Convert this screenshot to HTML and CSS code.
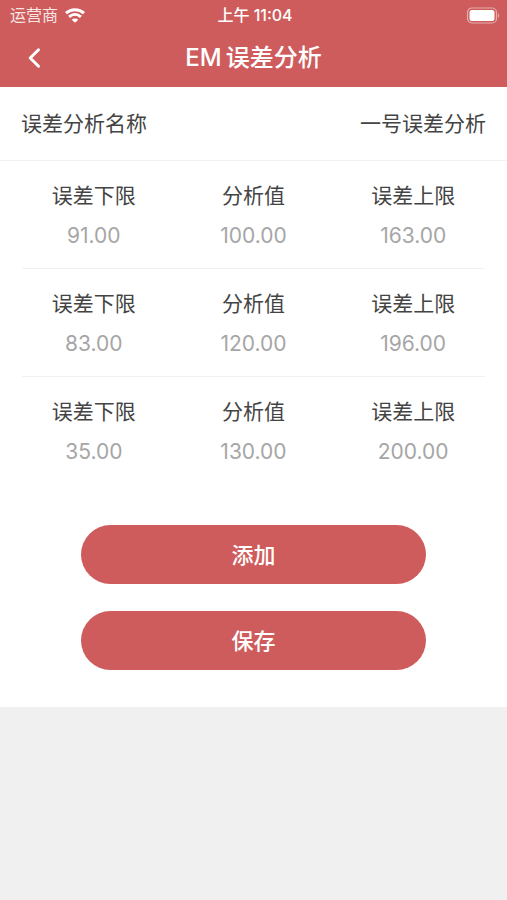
FILE: index.html
```html
<!DOCTYPE html>
<html lang="zh-CN">
<head>
<meta charset="utf-8">
<meta name="viewport" content="width=device-width, initial-scale=1">
<title>EM误差分析</title>
<link rel="stylesheet" href="styles.css">
</head>
<body>
<header class="top">
  <div class="status">
    <div class="carrier">
      <span>运营商</span>
      <svg width="20" height="15" viewBox="0 0 20 15" fill="none" stroke="#fff" aria-hidden="true">
        <path d="M1 5.2C6 .6 14 .6 19 5.2" stroke-width="3"/>
        <path d="M4.1 8.9c3.5-3.2 8.3-3.2 11.8 0" stroke-width="2.8"/>
        <path d="M10 14.8 6.7 11.7c1.9-1.7 4.7-1.7 6.6 0z" fill="#fff" stroke="none"/>
      </svg>
    </div>
    <span class="time">上午 11:04</span>
    <svg class="battery" width="34" height="17" viewBox="0 0 34 17" aria-hidden="true">
      <rect x="1.5" y="1" width="29" height="15" rx="4.5" fill="none" stroke="#fff" stroke-opacity=".5" stroke-width="1.2"/>
      <rect x="3.5" y="3" width="25" height="11" rx="2.5" fill="#fff"/>
      <path d="M32 6.2c1.5.8 1.5 3.8 0 4.6z" fill="#fff" fill-opacity=".5"/>
    </svg>
  </div>
  <nav class="nav">
    <button class="back" type="button" aria-label="返回">
      <svg width="14" height="22" viewBox="0 0 14 22" fill="none" stroke="#fff" stroke-width="3" stroke-linecap="round" stroke-linejoin="round" aria-hidden="true"><path d="M11.5 2.8 3.2 11l8.3 8.2"/></svg>
    </button>
    <h1 class="title">EM&thinsp;误差分析</h1>
  </nav>
</header>
<main>
  <form class="form">
    <div class="name-row">
      <label for="name">误差分析名称</label>
      <input class="name" id="name" type="text" value="一号误差分析">
    </div>
    <div class="group">
      <label class="cell">误差下限<input class="value" type="text" inputmode="decimal" value="91.00"></label>
      <label class="cell">分析值<input class="value" type="text" inputmode="decimal" value="100.00"></label>
      <label class="cell">误差上限<input class="value" type="text" inputmode="decimal" value="163.00"></label>
    </div>
    <hr class="divider">
    <div class="group">
      <label class="cell">误差下限<input class="value" type="text" inputmode="decimal" value="83.00"></label>
      <label class="cell">分析值<input class="value" type="text" inputmode="decimal" value="120.00"></label>
      <label class="cell">误差上限<input class="value" type="text" inputmode="decimal" value="196.00"></label>
    </div>
    <hr class="divider">
    <div class="group">
      <label class="cell">误差下限<input class="value" type="text" inputmode="decimal" value="35.00"></label>
      <label class="cell">分析值<input class="value" type="text" inputmode="decimal" value="130.00"></label>
      <label class="cell">误差上限<input class="value" type="text" inputmode="decimal" value="200.00"></label>
    </div>
    <div class="actions">
      <button class="action" type="button">添加</button>
      <button class="action" type="button">保存</button>
    </div>
  </form>
</main>
</body>
</html>
```

FILE: styles.css
```css
* {
  box-sizing: border-box;
}

body {
  margin: 0;
  background: #f0f0f0;
  color: #444;
  font-family: Inter, "Noto Sans CJK SC", sans-serif;
  font-size: 21px;
  line-height: 30px;
}

input,
button {
  margin: 0;
  padding: 0;
  border: 0;
  background: none;
  color: inherit;
  font: inherit;
}

.top {
  background: #ce5c5c;
  color: #fff;
}

.status {
  display: grid;
  grid-template-columns: 1fr auto 1fr;
  align-items: center;
  height: 29px;
  padding: 0 7px 0 10px;
  font-size: 16px;
}

.carrier {
  display: flex;
  align-items: center;
  gap: 7px;
}

.carrier span {
  opacity: 0.85;
}

.time {
  font-weight: 500;
}

.battery {
  justify-self: end;
}

.nav {
  display: grid;
  grid-template-columns: 44px 1fr 44px;
  align-items: center;
  height: 58px;
  padding: 0 12px;
}

.back {
  display: flex;
  align-items: center;
  justify-content: center;
  height: 44px;
}

.title {
  margin: 0;
  font-size: 24px;
  font-weight: 500;
  text-align: center;
}

.form {
  background: #fff;
}

.name-row {
  display: flex;
  align-items: center;
  justify-content: space-between;
  gap: 20px;
  height: 74px;
  padding: 0 21px;
  border-bottom: 1px solid #f1f1f1;
}

.name {
  flex: 1;
  min-width: 0;
  text-align: right;
}

.group {
  display: grid;
  grid-template-columns: repeat(3, 1fr);
  padding: 20px 14px 17px;
}

.cell {
  display: flex;
  flex-direction: column;
  gap: 10px;
  text-align: center;
}

.value {
  width: 100%;
  height: 30px;
  color: #a6a6a6;
  text-align: center;
}

.divider {
  height: 1px;
  margin: 0 22px;
  border: 0;
  background: #f1f1f1;
}

.actions {
  display: flex;
  flex-direction: column;
  align-items: center;
  gap: 27px;
  padding: 41px 0 37px;
}

.action {
  width: 68%;
  height: 59px;
  border-radius: 30px;
  background: #ce5c5c;
  color: #fff;
  font-size: 22px;
  font-weight: 500;
}
```
